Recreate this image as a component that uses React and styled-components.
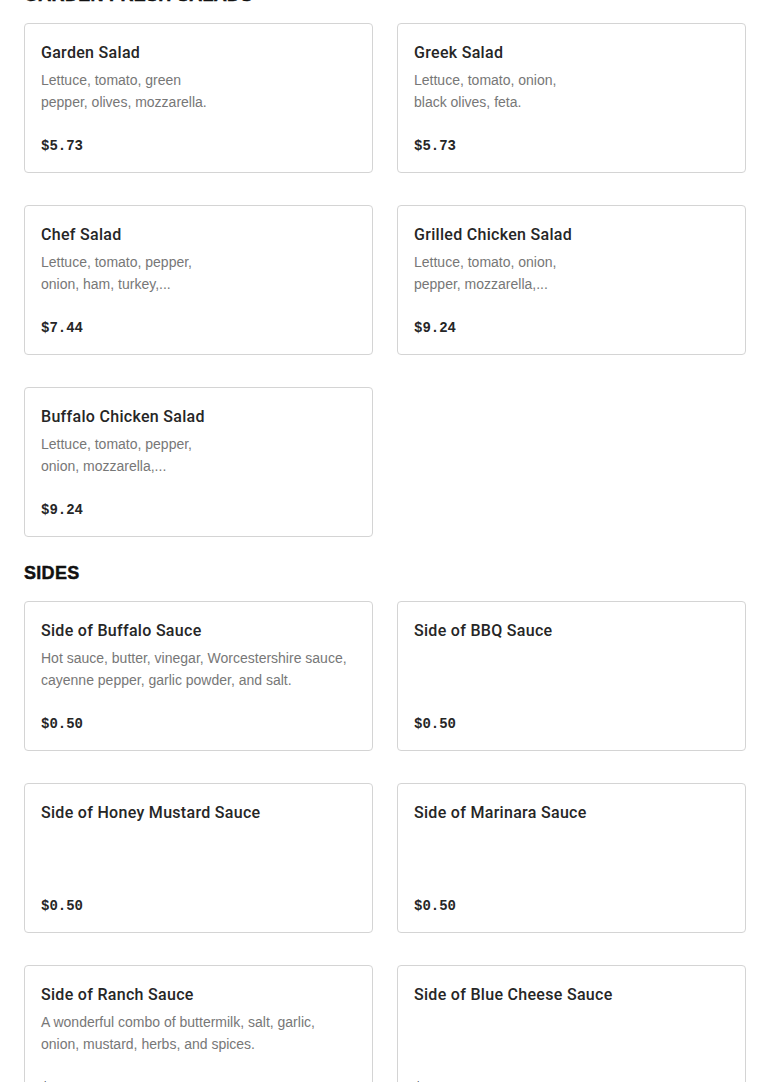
import React from "react";
import styled, { createGlobalStyle } from "styled-components";

const GlobalStyle = createGlobalStyle`
  html, body {
    margin: 0;
    padding: 0;
    background: #ffffff;
  }
  body {
    font-family: "Liberation Sans", Arial, sans-serif;
    color: #222222;
    overflow: hidden;
  }
  * { box-sizing: border-box; }
`;

const Page = styled.main`
  padding: 0 24px;
  margin-top: -17px;
`;

const Section = styled.section`
  display: flex;
  flex-direction: column;
  & + & {
    margin-top: 24px;
  }
`;

const SectionTitle = styled.h2`
  margin: 0 0 16px;
  font-family: "Liberation Sans", Arial, sans-serif;
  font-size: 18px;
  line-height: 24px;
  font-weight: 900;
  letter-spacing: 0.3px;
  color: #111111;
  text-transform: uppercase;
  -webkit-text-stroke: 0.45px #111111;
`;

const Grid = styled.div`
  display: grid;
  grid-template-columns: 1fr 1fr;
  column-gap: 24px;
  row-gap: 32px;
`;

const Card = styled.article`
  height: 150px;
  border: 1px solid #d4d4d4;
  border-radius: 4px;
  padding: 16px;
  display: flex;
  flex-direction: column;
  background: #fff;
`;

const ItemName = styled.h3`
  margin: 1px 0 4px;
  font-family: Roboto, "Liberation Sans", Arial, sans-serif;
  font-size: 16px;
  line-height: 24px;
  font-weight: 500;
  letter-spacing: 0.3px;
  color: #262626;
`;

const Description = styled.p`
  margin: 0;
  font-family: "Liberation Sans", Arial, sans-serif;
  font-size: 14px;
  line-height: 22px;
  color: #777777;
  max-width: ${(p) => (p.$narrow ? "172px" : "none")};
`;

const Price = styled.span`
  margin-top: auto;
  font-family: "Liberation Mono", "Courier New", monospace;
  font-size: 14px;
  line-height: 20px;
  font-weight: 700;
  color: #262626;
`;

const sections = [
  {
    title: "Garden Fresh Salads",
    narrow: true,
    items: [
      { name: "Garden Salad", desc: "Lettuce, tomato, green pepper, olives, mozzarella.", price: "$5.73" },
      { name: "Greek Salad", desc: "Lettuce, tomato, onion, black olives, feta.", price: "$5.73" },
      { name: "Chef Salad", desc: "Lettuce, tomato, pepper, onion, ham, turkey,...", price: "$7.44" },
      { name: "Grilled Chicken Salad", desc: "Lettuce, tomato, onion, pepper, mozzarella,...", price: "$9.24" },
      { name: "Buffalo Chicken Salad", desc: "Lettuce, tomato, pepper, onion, mozzarella,...", price: "$9.24" },
    ],
  },
  {
    title: "Sides",
    narrow: false,
    items: [
      { name: "Side of Buffalo Sauce", desc: "Hot sauce, butter, vinegar, Worcestershire sauce, cayenne pepper, garlic powder, and salt.", price: "$0.50" },
      { name: "Side of BBQ Sauce", desc: "", price: "$0.50" },
      { name: "Side of Honey Mustard Sauce", desc: "", price: "$0.50" },
      { name: "Side of Marinara Sauce", desc: "", price: "$0.50" },
      { name: "Side of Ranch Sauce", desc: "A wonderful combo of buttermilk, salt, garlic, onion, mustard, herbs, and spices.", price: "$0.50" },
      { name: "Side of Blue Cheese Sauce", desc: "", price: "$0.50" },
    ],
  },
];

export default function App() {
  return (
    <>
      <GlobalStyle />
      <Page>
        {sections.map((s) => (
          <Section key={s.title}>
            <SectionTitle>{s.title}</SectionTitle>
            <Grid>
              {s.items.map((it) => (
                <Card key={it.name}>
                  <ItemName>{it.name}</ItemName>
                  {it.desc && <Description $narrow={s.narrow}>{it.desc}</Description>}
                  <Price>{it.price}</Price>
                </Card>
              ))}
            </Grid>
          </Section>
        ))}
      </Page>
    </>
  );
}
